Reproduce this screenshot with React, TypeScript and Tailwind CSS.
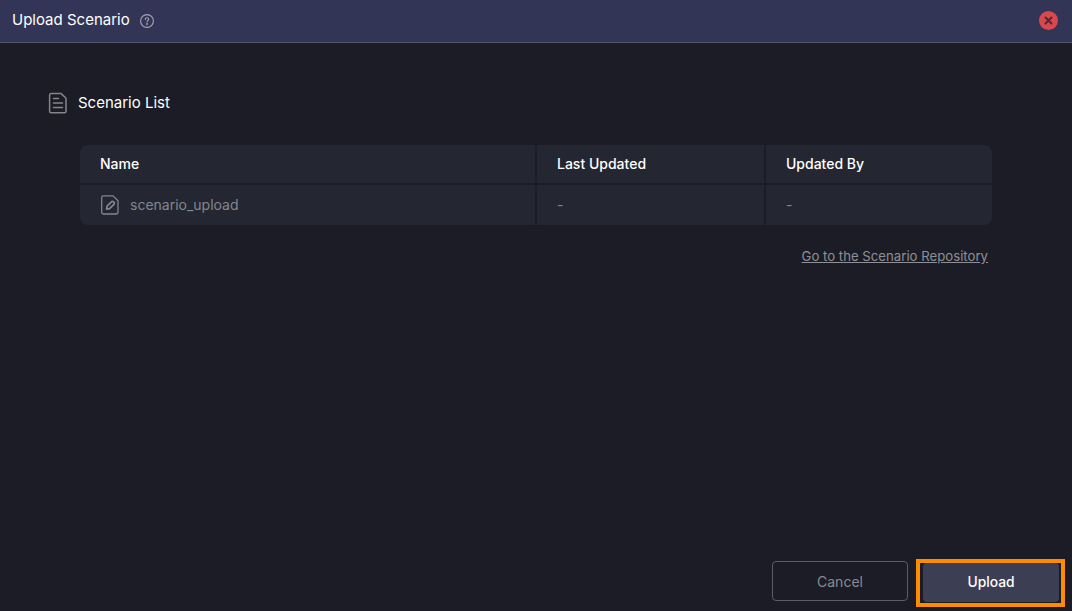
import React from 'react';

function HelpIcon() {
  return (
    <svg width="16" height="16" viewBox="0 0 16 16" fill="none" stroke="#a5a6b4" strokeWidth="1.1" strokeLinecap="round">
      <circle cx="8" cy="8" r="6.4" />
      <path d="M6.3 6.4c0-1 .8-1.6 1.7-1.6s1.7.6 1.7 1.5c0 1.3-1.7 1.4-1.7 2.7" />
      <circle cx="8" cy="11" r="0.35" fill="#a5a6b4" />
    </svg>
  );
}

function DocIcon() {
  return (
    <svg width="20" height="22" viewBox="0 0 20 22" fill="none" stroke="#85868c" strokeWidth="1.5" strokeLinejoin="round">
      <path d="M3.2 1.6h10l4.8 4.6v13a1.6 1.6 0 0 1-1.6 1.6H3.2a1.6 1.6 0 0 1-1.6-1.6V3.2a1.6 1.6 0 0 1 1.6-1.6z" />
      <path d="M5.5 6.5h5M5.5 11h9M5.5 15.5h9" strokeLinecap="round" strokeWidth="1.6" />
    </svg>
  );
}

function EditFileIcon() {
  return (
    <svg width="18" height="20" viewBox="0 0 18 20" fill="none" stroke="#85868e" strokeWidth="1.3" strokeLinejoin="round">
      <path d="M2.4.9h9.6l5 4.8v11.6a1.7 1.7 0 0 1-1.7 1.7H2.4a1.7 1.7 0 0 1-1.7-1.7V2.6A1.7 1.7 0 0 1 2.4.9z" />
      <path d="M5.6 14.2l.5-3 4.3-4.3a1.5 1.5 0 0 1 2.2 0l.3.3a1.5 1.5 0 0 1 0 2.2l-4.3 4.3z" strokeWidth="1.7" />
    </svg>
  );
}

export default function App() {
  return (
    <div className="h-[611px] w-[1072px] flex flex-col overflow-hidden bg-[#1b1c25] font-['Inter',sans-serif]">
      <div className="h-[43px] shrink-0 flex items-center justify-between pl-3 pr-[14px] pb-px bg-[#333556] border-b border-[#53556a]">
        <div className="flex items-center gap-[9px]">
          <span className="text-[15px] text-white">Upload Scenario</span>
          <HelpIcon />
        </div>
        <div className="w-[19px] h-[19px] rounded-full bg-[#d9484c] flex items-center justify-center">
          <svg width="9" height="9" viewBox="0 0 9 9" stroke="#3a3040" strokeWidth="2" strokeLinecap="round">
            <path d="M1.5 1.5l6 6M7.5 1.5l-6 6" />
          </svg>
        </div>
      </div>

      <div className="flex-1 flex flex-col pl-12 pr-20 pt-[48px]">
        <div className="flex items-center gap-[10px] h-[24px]">
          <DocIcon />
          <span className="text-[15px] text-white">Scenario List</span>
        </div>

        <div className="ml-8 mt-[30px] w-[912px] grid grid-cols-[455px_227px_226px] grid-rows-[38px_40px] gap-[2px] rounded-lg overflow-hidden text-[14px]">
          <div className="bg-[#242631] flex items-center pl-5 pb-[2px] font-medium text-white">Name</div>
          <div className="bg-[#242631] flex items-center pl-5 pb-[2px] font-medium text-white">Last Updated</div>
          <div className="bg-[#242631] flex items-center pl-5 pb-[2px] font-medium text-white">Updated By</div>
          <div className="bg-[#242631] flex items-center pl-[21px] gap-[11px] text-[#85868e]">
            <EditFileIcon />
            <span className="-mt-px">scenario_upload</span>
          </div>
          <div className="bg-[#242631] flex items-center pl-5 pb-[2px] text-[#85868e]">-</div>
          <div className="bg-[#242631] flex items-center pl-5 pb-[2px] text-[#85868e]">-</div>
        </div>

        <div className="ml-8 w-[908px] mt-[18px] text-right">
          <a className="text-[13.2px] leading-5 text-[#8f9097] underline">Go to the Scenario Repository</a>
        </div>
      </div>

      <div className="shrink-0 flex justify-end gap-[15px] pr-[13px] pb-[9px]">
        <button className="w-[136px] h-[40px] rounded border border-[#5c5d64] text-[14px] text-[#8a8b91]">Cancel</button>
        <div className="relative">
          <button className="w-[136px] h-[39px] mt-[2px] pb-px rounded bg-[#3c3e54] text-[13.8px] font-medium text-white">Upload</button>
          <div className="absolute -left-[7px] -right-[6px] -top-[2px] -bottom-[5px] border-4 border-[#ff8c00] pointer-events-none" />
        </div>
      </div>
    </div>
  );
}
